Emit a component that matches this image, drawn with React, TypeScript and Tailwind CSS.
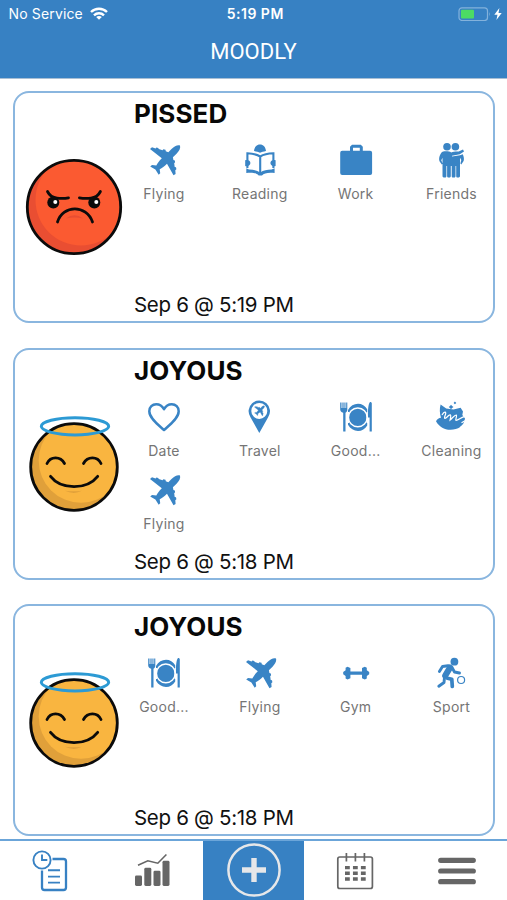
import type { ReactNode } from "react";

type ActivityName =
  | "Flying"
  | "Reading"
  | "Work"
  | "Friends"
  | "Date"
  | "Travel"
  | "Good..."
  | "Cleaning"
  | "Gym"
  | "Sport";

type Entry = {
  mood: "PISSED" | "JOYOUS";
  date: string;
  activities: ActivityName[];
};

const entries: Entry[] = [
  {
    mood: "PISSED",
    date: "Sep 6 @ 5:19 PM",
    activities: ["Flying", "Reading", "Work", "Friends"],
  },
  {
    mood: "JOYOUS",
    date: "Sep 6 @ 5:18 PM",
    activities: ["Date", "Travel", "Good...", "Cleaning", "Flying"],
  },
  {
    mood: "JOYOUS",
    date: "Sep 6 @ 5:18 PM",
    activities: ["Good...", "Flying", "Gym", "Sport"],
  },
];

const PLANE =
  "M34 3.4C31.5 2.6 28.5 4 25.5 7L22.3 10.2L19.8 9.3L19.5 7.8L17.3 7.2L16.5 8.3L12.8 7.1L12.2 5.9L10.4 5.5L9.6 6.4L6 5.3L4 7L15.8 16.2C13 19 11.3 21.5 10.3 23.6L6 23L4.2 24.6L9.4 27.6L12.7 32.8L14.2 31.2L13.7 27.2C16 26 18.6 24 21 21.7L27.5 33.2L29.6 32L29.3 28.2L30.4 27.2L30 25.3L28.7 24.9L28.2 21.3L29.1 20.3L28.8 18.4L27.4 17.9L26.9 15.3L30.3 12C33.2 9 34.8 6 34 3.4Z";

const activityIcons: Record<ActivityName, ReactNode> = {
  Flying: <path d={PLANE} />,
  Reading: (
    <>
      <path d="M12 9C12.5 5 14.7 2.6 18 2.6S23.5 5 24 9C21.5 9.5 19.5 10 18 10.8C16.5 10 14.5 9.5 12 9Z" />
      <path
        d="M5.4 19V11.3C10.5 11.5 15 12.5 18.2 14.5C21.5 12.5 26 11.5 31.4 11.3V19M5.4 22V26M31.4 22V26M18.2 14.5V31"
        fill="none"
        stroke="currentColor"
        strokeWidth="2.1"
      />
      <path d="M3.2 18.2C6 17.5 8.4 18.8 8.4 21S6 24.7 3.2 24ZM33.6 18.2C30.8 17.5 28.4 18.8 28.4 21S30.8 24.7 33.6 24Z" />
      <path d="M4.3 26.2L7 27.6C11.5 27.6 15.3 28.6 18.2 30.4C21.5 28.6 25 27.6 29.6 27.6L32.6 26.2V31C26 30.5 22 31 20 33.6H16.7C14.5 31 11 30.5 4.3 31Z" />
    </>
  ),
  Work: (
    <path
      fillRule="evenodd"
      d="M4.2 8.7H12V4.8L14 2.8H22.8L24.8 4.8V8.7H32.1A2 2 0 0 1 34.1 10.7V31A2 2 0 0 1 32.1 33H4.2A2 2 0 0 1 2.2 31V10.7A2 2 0 0 1 4.2 8.7ZM15 8.7H21.8V5.8H15Z"
    />
  ),
  Friends: (
    <>
      <circle cx="14" cy="4.7" r="3.8" />
      <circle cx="22.4" cy="4.7" r="3.8" />
      <path d="M9.5 9.8C12 9.1 16 9.1 18.2 10.4C20.5 9.3 24 9.4 25.7 9.5L30 7.4L31 9.4L26.8 12.2L19 13.7V14.4L27 13.3L29.8 12.3C31 15 31.2 17.5 30.6 19L28.3 22.5L27.4 21.6L28.3 18L27 15.7V34.5L26 35.5H23.8L23.2 34.5V24H22.5V34.5L21.8 35.5H19.3L18.7 34.5V24H17.8V34.5L17 35.5H14.8L14.1 34.5V24H13.4V34.5L12.7 35.5H10.5L9.5 34.5V15.7L8.3 18.2L9.7 21.7L8.8 22.6L6.5 19.3C5.6 16.5 6.7 11.8 9.5 9.8Z" />
    </>
  ),
  Date: (
    <path
      d="M18 31C13 26.5 3.3 19.3 3.3 12.2C3.3 8 6.4 5.2 10.2 5.2C13.5 5.2 16.3 7 18 10.3C19.7 7 22.5 5.2 25.8 5.2C29.6 5.2 32.7 8 32.7 12.2C32.7 19.3 23 26.5 18 31Z"
      fill="none"
      stroke="currentColor"
      strokeWidth="2.5"
      strokeLinejoin="round"
    />
  ),
  Travel: (
    <>
      <path
        fillRule="evenodd"
        d="M17.3 34L8.6 18.4A10.7 10.7 0 1 1 26 18.4ZM17.3 3.9A8 8 0 1 0 17.3 19.9A8 8 0 1 0 17.3 3.9Z"
      />
      <path d={PLANE} transform="translate(11.2 5.8) scale(.33)" stroke="currentColor" />
    </>
  ),
  "Good...": (
    <>
      <path d="M2.2 3.4H3.5V9H4.4V3.4H5.6V9H6.4V3.4H7.5V9H8.2V3.4H9.3V10.5C9.3 12.3 8.5 13.2 7.5 13.7V32.5H5.2V13.7C3.2 13.1 2.2 12 2.2 10.5ZM32 3C33.3 3 33.8 3.5 33.8 4.5V32.5H31.6V18.5H30C29.8 11.5 30.2 5 32 3Z" />
      <path d="M10 11C12.4 7 15.9 4.8 20 4.8C23.8 4.8 27.3 6.8 29.2 10.3V13H28.5V24H29.2V26.5C27.3 30 23.8 32 20 32C15.9 32 12.4 29.8 10 25.8V24H11V13H10Z" />
      <circle cx="19.8" cy="18.4" r="9.4" fill="none" stroke="#fff" strokeWidth="1.5" />
    </>
  ),
  Cleaning: (
    <>
      <path d="M7.6 5.4L13.2 9.4L20.5 10.6L27.6 8.8L30 12.5L29.3 16L32 19.5C31 27 25 30.8 17.5 30.8C11 30.8 6 27.5 3 22.2C4.2 19.8 6 19 8 18.7C6.6 14.5 6.4 9.5 7.6 5.4Z" />
      <path
        d="M9 16C11.5 11.5 14 12.5 12 16.8C10.8 20 12 20.4 15.6 16.5C19 14 17.4 19 17.1 21C19.5 19 21.6 15.8 23.3 16C24.4 17 22 20.8 23 21.4C25 21.6 27.7 18.6 31.2 17.6M32.5 21.5L28.5 23.7M31 26L27.5 28.2"
        fill="none"
        stroke="#fff"
        strokeWidth="1.2"
      />
      <path d="M18 5.7L19.1 7L20.5 8L19.1 8.9L18 10.2L17 8.9L15.7 8L17 7ZM21.9 2.5L23.3 3.9L21.9 5.3L20.6 3.9Z" />
    </>
  ),
  Gym: (
    <path d="M5.2 17L7.6 15.3V12.8L9.5 11.8L12.4 13V16.4H24V13L26.8 11.8L28.8 12.8V15.3L31.2 17V19.2L28.8 20.9V23.4L26.8 24.4L24 23.2V19.7H12.4V23.2L9.5 24.4L7.6 23.4V20.9L5.2 19.2Z" />
  ),
  Sport: (
    <>
      <circle cx="21.4" cy="6.7" r="3.9" />
      <path
        d="M17 12.6L12.3 20.5"
        fill="none"
        stroke="currentColor"
        strokeWidth="6.2"
        strokeLinecap="round"
      />
      <path
        d="M15 10.8L9.5 11.5L6.4 16.5M19 12.5L21.5 17L26.5 18M11.6 21.5L11 27.5L5.8 31.2"
        fill="none"
        stroke="currentColor"
        strokeWidth="2.9"
        strokeLinecap="round"
        strokeLinejoin="round"
      />
      <path
        d="M14.5 23.3L18.8 24.3L19.3 31.5"
        fill="none"
        stroke="currentColor"
        strokeWidth="3.7"
        strokeLinecap="round"
        strokeLinejoin="round"
      />
      <circle cx="28.1" cy="25" r="3.5" fill="none" stroke="currentColor" strokeWidth="1.2" />
    </>
  ),
};

const AngryFace = () => (
  <svg viewBox="0 0 100 100" className="size-[100px] shrink-0" fill="none">
    <clipPath id="angry-head">
      <circle cx="50" cy="50" r="46.7" />
    </clipPath>
    <circle cx="50" cy="50" r="46.7" fill="#e94e32" />
    <circle cx="57" cy="43" r="45.5" fill="#fb5a31" clipPath="url(#angry-head)" />
    <circle cx="50" cy="50" r="46.7" stroke="#0b0b0b" strokeWidth="2.8" />
    <path d="M42 61.5Q50.5 55 59 61.5Q50.5 59.5 42 61.5Z" fill="#e94e32" />
    <g stroke="#0b0b0b" strokeWidth="2.8" strokeLinecap="round" strokeLinejoin="round">
      <path d="M23.5 34.5Q26.5 40.5 33 41.2T44.5 40.8M76.4 34.5Q73.4 40.5 67 41.2T55.4 40.8" />
      <path d="M33.5 65C39 47.5 62.5 47.5 68.5 65" />
    </g>
    <circle cx="29.3" cy="45.6" r="6" fill="#0b0b0b" />
    <circle cx="70.3" cy="45.6" r="6" fill="#0b0b0b" />
    <circle cx="31.3" cy="45" r="2" fill="#fff" />
    <circle cx="72.3" cy="45" r="2" fill="#fff" />
  </svg>
);

const JoyousFace = () => (
  <svg viewBox="0 0 100 100" className="size-[100px] shrink-0" fill="none">
    <clipPath id="joyous-head">
      <circle cx="50" cy="53" r="43.3" />
    </clipPath>
    <circle cx="50" cy="53" r="43.3" fill="#e0a03a" />
    <circle cx="57" cy="46.5" r="42.3" fill="#f9b540" clipPath="url(#joyous-head)" />
    <circle cx="50" cy="53" r="43.3" stroke="#0b0b0b" strokeWidth="2.8" />
    <path d="M41 76.8Q50 77.8 58 76.8Q50 81 41 76.8Z" fill="#e0a03a" />
    <g stroke="#0b0b0b" strokeWidth="2.8" strokeLinecap="round">
      <path d="M23 49.5C26.5 42 36.5 42 40.5 49.5M59.5 49.5C63.5 42 73.5 42 77 49.5" />
      <path d="M26.5 62.3C37 76 63 76 73.7 62.3" />
    </g>
    <ellipse cx="51" cy="12.3" rx="33.7" ry="8.6" stroke="#2c9ad4" strokeWidth="3" />
  </svg>
);

const StatusBar = () => (
  <div className="flex h-[27px] items-center justify-between pl-[8.5px] pr-[5px] text-[14px]">
    <div className="flex flex-1 items-center gap-[7px]">
      <span className="tracking-[0.15px]">No Service</span>
      <svg viewBox="0 0 18 13" className="h-[13px] w-[18px]" fill="none" stroke="currentColor" strokeWidth="2.4">
        <path d="M1 5C5.5.7 12.5.7 17 5M4 8.3C6.8 5.6 11.2 5.6 14 8.3" />
        <path d="M9 12.8L6.2 10C7.8 8.5 10.2 8.5 11.8 10Z" fill="currentColor" stroke="none" />
      </svg>
    </div>
    <span className="font-semibold tracking-[0.5px]">5:19 PM</span>
    <div className="flex flex-1 items-center justify-end gap-[3px]">
      <svg viewBox="0 0 33 14" className="h-[14px] w-[33px]" fill="none">
        <rect x="1" y=".8" width="28.5" height="12.7" rx="3" stroke="#83b2dc" strokeWidth="1.2" />
        <rect x="3" y="2.8" width="13" height="8.7" rx="1" fill="#4cdb64" />
        <path d="M31 5V9.4Q32.6 7.2 31 5Z" fill="#83b2dc" />
      </svg>
      <svg viewBox="0 0 8 12" className="h-3 w-2" fill="currentColor">
        <path d="M5.4 0L.3 6.7H3.5L2.4 12L7.7 4.9H4.5Z" />
      </svg>
    </div>
  </div>
);

const EntryCard = ({ mood, date, activities }: Entry) => (
  <article className="flex h-[232px] shrink-0 items-center rounded-[16px] border-2 border-[#8ab6df] bg-white pl-[9px] pr-[11px]">
    {mood === "PISSED" ? <AngryFace /> : <JoyousFace />}
    <div className="ml-[10.5px] flex h-full flex-1 flex-col">
      <h2 className="mt-1 text-[26px] leading-[34px] font-bold tracking-[0.1px] text-[#080808]">
        {mood}
      </h2>
      <ul className="mt-[11px] grid grid-cols-[repeat(4,60px)] justify-between gap-y-[12px]">
        {activities.map((name) => (
          <li key={name} className="flex h-[61px] flex-col items-center">
            <svg viewBox="0 0 36 36" className="size-9 shrink-0 text-[#3984c5]" fill="currentColor">
              {activityIcons[name]}
            </svg>
            <span className="mt-[6px] text-[14px] leading-5 tracking-[0.25px] whitespace-nowrap text-[#757575]">
              {name}
            </span>
          </li>
        ))}
      </ul>
      <p className="mt-auto mb-[2px] text-[20.5px] leading-7 tracking-[-0.3px] text-[#111]">{date}</p>
    </div>
  </article>
);

const TabBar = () => (
  <nav className="grid h-[61px] shrink-0 grid-cols-5 border-t-2 border-[#6ba5d9] bg-white text-[#666]">
    <button className="flex items-center justify-center pr-[2px] text-[#3781c3]" aria-label="Entries">
      <svg viewBox="0 0 36 42" className="h-[42px] w-9" fill="none" stroke="currentColor" strokeWidth="2.3">
        <path d="M20.5 9H31.5Q34 9 34 11.5V37.5Q34 40 31.5 40H12.5Q10 40 10 37.5V20.5" />
        <circle cx="10" cy="10" r="8.6" strokeWidth="1.9" />
        <path d="M10 4.5V10H15.3M16 20.3H28M16 26.6H28M16 32.6H28" strokeWidth="1.9" />
      </svg>
    </button>
    <button className="flex items-center justify-center pb-px" aria-label="Statistics">
      <svg viewBox="0 0 36 34" className="h-[34px] w-9" fill="currentColor">
        <rect x="1" y="22.5" width="7" height="10.5" rx="1.4" />
        <rect x="10.3" y="14.8" width="7" height="18.2" rx="1.4" />
        <rect x="19.5" y="17.7" width="7" height="15.3" rx="1.4" />
        <rect x="28.5" y="7.8" width="7" height="25.2" rx="1.4" />
        <path d="M4 12.2L13.8 7.8L23.8 10.2L32.4 1.5" fill="none" stroke="currentColor" strokeWidth="1.6" />
      </svg>
    </button>
    <button
      className="flex items-center justify-center bg-[#3781c3] pb-px pl-px text-[#e6e7e9]"
      aria-label="Add entry"
    >
      <svg viewBox="0 0 56 56" className="size-14" fill="none" stroke="currentColor">
        <circle cx="28" cy="28" r="25.6" strokeWidth="2.5" />
        <path d="M28 16V40M16 28H40" strokeWidth="5.4" />
      </svg>
    </button>
    <button className="flex items-center justify-center pl-px" aria-label="Calendar">
      <svg viewBox="0 0 38 38" className="size-[38px]" fill="none" stroke="currentColor">
        <rect x="1.8" y="5" width="34.6" height="31.5" rx="2" strokeWidth="1.7" />
        <path d="M10.4 1V9.5M19.4 1V9.5M28.4 1V9.5" strokeWidth="1.7" />
        <path d="M9 15.6H29.7M9 21.3H29.7M9 27H29.7" strokeWidth="3.4" strokeDasharray="4.8 3.15" />
      </svg>
    </button>
    <button className="flex items-center justify-center pl-px" aria-label="Menu">
      <svg viewBox="0 0 38 28" className="h-7 w-[38px]" stroke="currentColor" strokeWidth="5.2" strokeLinecap="round">
        <path d="M2.7 3.3H35.3M2.7 14H35.3M2.7 24.7H35.3" />
      </svg>
    </button>
  </nav>
);

export default function App() {
  return (
    <div className="flex h-[900px] w-[507px] flex-col overflow-hidden bg-white font-['Inter','Liberation_Sans',sans-serif]">
      <header className="h-[79px] shrink-0 border-b border-[#a9bfd4] bg-[#3781c3] text-white">
        <StatusBar />
        <h1 className="pt-[10px] text-center font-['Roboto',sans-serif] text-[22px] leading-[30px]">MOODLY</h1>
      </header>
      <main className="flex min-h-0 flex-1 flex-col gap-[24.7px] overflow-hidden px-[12.5px] pt-3">
        {entries.map((entry, i) => (
          <EntryCard key={i} {...entry} />
        ))}
      </main>
      <TabBar />
    </div>
  );
}
